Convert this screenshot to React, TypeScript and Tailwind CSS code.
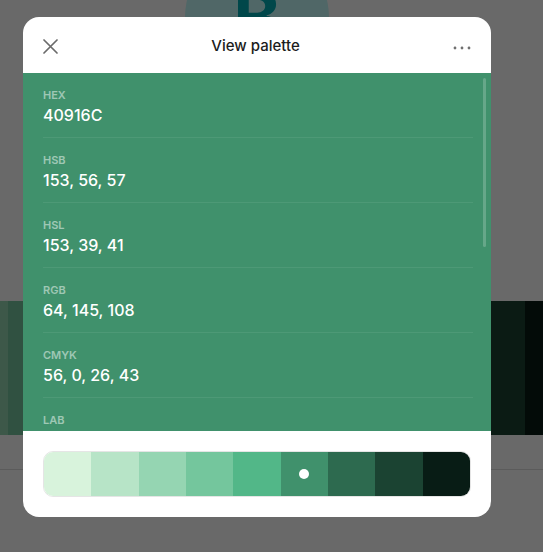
import { useState } from 'react';

const palette = ['#d8f3dc', '#b7e4c7', '#95d5b2', '#74c69d', '#52b788', '#40916c', '#2d6a4f', '#1b4332', '#081c15'];

const formats = [
  { label: 'HEX', value: '40916C' },
  { label: 'HSB', value: '153, 56, 57' },
  { label: 'HSL', value: '153, 39, 41' },
  { label: 'RGB', value: '64, 145, 108' },
  { label: 'CMYK', value: '56, 0, 26, 43' },
  { label: 'LAB', value: '54, -39, 12' },
  { label: 'XYZ', value: '15, 22, 19' },
];

function Backdrop() {
  return (
    <div className="flex flex-col">
      <div className="h-[301px] pl-[185px]">
        <div className="-mt-[55px] flex h-[144px] w-[144px] items-center justify-center rounded-full bg-[#c3fafa]">
          <span className="text-[72px] font-bold leading-none text-[#00acb4]">B</span>
        </div>
      </div>
      <div className="flex h-[134px]">
        <div className="w-[8px] bg-[#95d5b2]" />
        <div className="w-[103px] bg-[#74c69d]" />
        <div className="w-[103px] bg-[#52b788]" />
        <div className="w-[103px] bg-[#40916c]" />
        <div className="w-[104px] bg-[#2d6a4f]" />
        <div className="w-[104px] bg-[#1b4332]" />
        <div className="flex-1 bg-[#081c15]" />
      </div>
      <div className="h-[35px] border-b border-[#dcdcdc]" />
    </div>
  );
}

export default function App() {
  const [selected] = useState(5);

  return (
    <div className="relative h-[552px] w-[543px] overflow-hidden bg-white font-['Inter',sans-serif]">
      <Backdrop />
      <div className="absolute inset-0 bg-black/[0.59]" />

      <div className="absolute left-[23px] top-[17px] w-[468px] overflow-hidden rounded-2xl bg-white">
        <div className="flex h-[56px] items-center justify-between px-5 pt-[3px]">
          <svg width="15" height="15" viewBox="0 0 15 15" className="text-[#6b6b6b]">
            <path d="M1 1L14 14M14 1L1 14" stroke="currentColor" strokeWidth="1.7" strokeLinecap="round" />
          </svg>
          <h2 className="text-[15px] font-medium text-[#1c1c1c]">View palette</h2>
          <svg width="18" height="4" viewBox="0 0 18 4" className="mt-[2px] text-[#707070]">
            <circle cx="2" cy="2" r="1.4" fill="currentColor" />
            <circle cx="9" cy="2" r="1.4" fill="currentColor" />
            <circle cx="16" cy="2" r="1.4" fill="currentColor" />
          </svg>
        </div>

        <div className="relative h-[358px] overflow-hidden bg-[#40916c]">
          <div className="pl-5 pr-[18px]">
            {formats.map((f) => (
              <div key={f.label} className="border-b border-white/[0.07] pb-[10px] pt-[15px]">
                <div className="text-[11px] font-semibold leading-[14px] text-white/50">{f.label}</div>
                <div className="mt-px text-[16px] font-medium leading-6 text-white">{f.value}</div>
              </div>
            ))}
          </div>
          <div className="absolute right-[5px] top-[5px] h-[169px] w-[3px] rounded-full bg-white/20" />
        </div>

        <div className="px-5 py-5">
          <div className="flex h-[46px] overflow-hidden rounded-[10px] border border-black/10">
            {palette.map((c, i) => (
              <div key={c} className="flex flex-1 items-center justify-center" style={{ backgroundColor: c }}>
                {i === selected && <span className="h-[10px] w-[10px] rounded-full bg-white" />}
              </div>
            ))}
          </div>
        </div>
      </div>
    </div>
  );
}
